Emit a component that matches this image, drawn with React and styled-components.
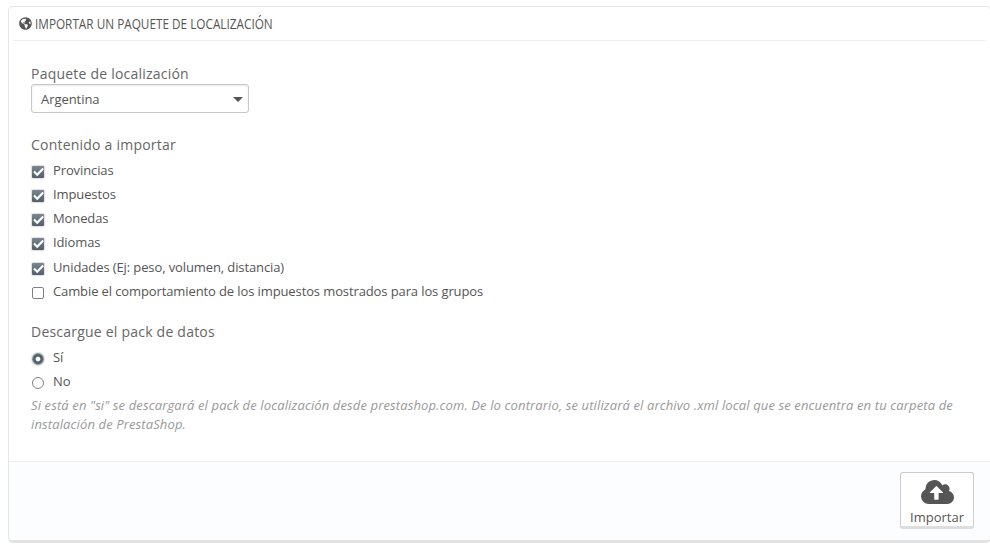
import React, { useState } from 'react';
import styled, { createGlobalStyle } from 'styled-components';
import { FaGlobeAmericas } from 'react-icons/fa';

const GlobalStyle = createGlobalStyle`
* {
    box-sizing: border-box;
}
body {
    margin: 0;
    overflow: hidden;
    background-color: #fff;
    color: #555;
    font-family: "Open Sans", "Noto Sans", sans-serif;
    font-size: 13px;
}
`;

const Panel = styled.div`
width: 983px;
height: 537px;
margin: 6px 0 0 8px;
display: flex;
flex-direction: column;
border: 1px solid #e6e6e6;
border-bottom: 3px solid #e2e2e2;
border-radius: 5px;
overflow: hidden;
`;

const Heading = styled.h3`
display: flex;
align-items: center;
height: 34px;
margin: 0 4px;
padding: 0 0 0 6px;
border-bottom: 1px solid #eee;
font-size: 14px;
font-weight: 500;
text-transform: uppercase;
flex: none;
`;

const GlobeIcon = styled(FaGlobeAmericas)`
width: 13px;
height: 13px;
margin-right: 3px;
flex: none;
`;

const HeadingText = styled.span`
transform: scaleX(0.841);
transform-origin: left center;
white-space: nowrap;
`;

const Form = styled.div`
flex: 1;
padding: 23px 22px 0;
`;

const Group = styled.div`
margin-bottom: ${props => props.$gap || 0}px;
`;

const Label = styled.div`
height: 20px;
line-height: 20px;
font-size: 14px;
letter-spacing: 0.22px;
color: #666;
margin-bottom: ${props => props.$space || 0}px;
`;

const Select = styled.button`
display: flex;
align-items: center;
justify-content: space-between;
width: 218px;
height: 29px;
padding: 1px 5px 0 9px;
background-color: #fff;
border: 1px solid #c7c7c7;
border-radius: 3px;
box-shadow: inset 0 1px 2px rgba(0,0,0,0.1);
font: inherit;
letter-spacing: -0.05px;
color: #555;
`;

const Caret = styled.span`
border: 5px solid transparent;
border-top-color: #555;
border-bottom: 0;
`;

const Option = styled.label`
display: flex;
align-items: center;
height: 24.2px;
line-height: 20px;
letter-spacing: -0.11px;
cursor: pointer;
`;

const Input = styled.input`
appearance: none;
flex: none;
width: 12px;
height: 12px;
margin: 4px 9px 0 1px;
border: 1px solid #808080;
border-radius: ${props => props.type === 'radio' ? '50%' : '2px'};
background-color: #fff;

&[type="checkbox"]:checked {
    border: none;
    border-radius: 1px;
    box-shadow: 0 0 1px 1px #dedede;
    background: url("data:image/svg+xml,%3Csvg xmlns='http://www.w3.org/2000/svg' viewBox='0 0 12 12'%3E%3Cpath d='M2 5.6 5.2 8.8 11.2 2.6' fill='none' stroke='white' stroke-width='2.1'/%3E%3C/svg%3E") center / 12px 12px no-repeat, linear-gradient(#7b8694, #525e6d);
}
&[type="radio"]:checked {
    border-color: #8b939d;
    box-shadow: 0 0 1px 1px #dedede;
    background: radial-gradient(circle, #fff 0 1.9px, #566170 2.8px);
}
`;

const Help = styled.p`
margin: 3px -10px 0 0;
line-height: 19px;
letter-spacing: 0.125px;
font-style: italic;
color: #999;
`;

const Footer = styled.div`
display: flex;
justify-content: flex-end;
height: 79px;
padding: 10px 16px 0 0;
border-top: 1px solid #eee;
background-color: #fcfdfe;
flex: none;
`;

const ImportButton = styled.button`
display: flex;
flex-direction: column;
align-items: center;
width: 74px;
height: 57px;
padding: 7px 0 0;
background-color: #fff;
border: 1px solid #ccc;
border-bottom: 3px solid #ddd;
border-radius: 3px;
font: inherit;
line-height: 20px;
color: #555;
cursor: pointer;
`;

const CloudSvg = styled.svg`
width: 33px;
height: 24px;
margin: 0 0 3px 1px;
fill: currentColor;
flex: none;
`;

const CloudIcon = () => (
    <CloudSvg viewBox="0 128 1920 1408" preserveAspectRatio="none">
        <path d="M1280 864q0-14-9-23l-352-352q-9-9-23-9t-23 9l-351 351q-10 12-10 24 0 14 9 23t23 9h224v352q0 13 9.5 22.5t22.5 9.5h192q13 0 22.5-9.5t9.5-22.5v-352h224q13 0 22.5-9.5t9.5-22.5zm640 288q0 159-112.5 271.5t-271.5 112.5h-1088q-185 0-316.5-131.5t-131.5-316.5q0-130 70-240t188-165q-2-30-2-43 0-212 150-362t362-150q156 0 285.5 87t188.5 231q71-62 166-62 106 0 181 75t75 181q0 76-41 138 130 31 213.5 135.5t83.5 238.5z" />
    </CloudSvg>
)

const contents = [
    'Provincias',
    'Impuestos',
    'Monedas',
    'Idiomas',
    'Unidades (Ej: peso, volumen, distancia)',
    'Cambie el comportamiento de los impuestos mostrados para los grupos',
]

const App = () => {

    const [download, setDownload] = useState('yes')

    return (
        <>
        <GlobalStyle />
        <Panel>
            <Heading>
                <GlobeIcon />
                <HeadingText>Importar un paquete de localización</HeadingText>
            </Heading>
            <Form>
                <Group $gap={22}>
                    <Label>Paquete de localización</Label>
                    <Select type="button">Argentina<Caret /></Select>
                </Group>
                <Group $gap={19}>
                    <Label $space={2.7}>Contenido a importar</Label>
                    {contents.map((text, i) => (
                        <Option key={text}>
                            <Input type="checkbox" defaultChecked={i < 5} />
                            {text}
                        </Option>
                    ))}
                </Group>
                <Group>
                    <Label $space={2.7}>Descargue el pack de datos</Label>
                    <Option>
                        <Input type="radio" name="download" checked={download === 'yes'} onChange={() => setDownload('yes')} />
                        Sí
                    </Option>
                    <Option>
                        <Input type="radio" name="download" checked={download === 'no'} onChange={() => setDownload('no')} />
                        No
                    </Option>
                    <Help>
                        Si está en "si" se descargará el pack de localización desde prestashop.com. De lo contrario, se utilizará el archivo .xml local que se encuentra en tu carpeta de instalación de PrestaShop.
                    </Help>
                </Group>
            </Form>
            <Footer>
                <ImportButton type="button">
                    <CloudIcon />
                    Importar
                </ImportButton>
            </Footer>
        </Panel>
        </>
    );
}

export default App;
